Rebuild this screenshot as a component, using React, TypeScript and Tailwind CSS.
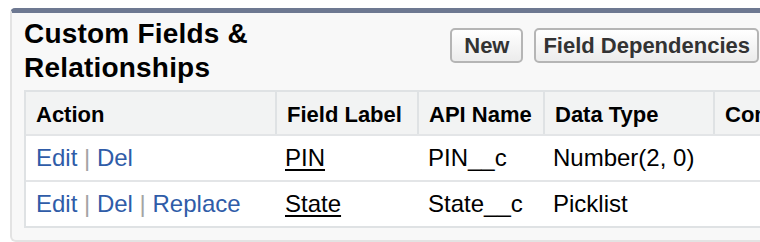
const font = { fontFamily: '"Liberation Sans", Arial, sans-serif' };

type Row = {
  actions: string[];
  label: string;
  api: string;
  type: string;
};

const rows: Row[] = [
  { actions: ['Edit', 'Del'], label: 'PIN', api: 'PIN__c', type: 'Number(2, 0)' },
  { actions: ['Edit', 'Del', 'Replace'], label: 'State', api: 'State__c', type: 'Picklist' },
];

const cols = 'grid grid-cols-[249px_142px_126px_170px_240px]';

function Button({ children, className }: { children: string; className: string }) {
  return (
    <button
      className={`h-[35px] rounded-[5px] border-2 border-[#b5b5b5] bg-gradient-to-b from-white to-[#ececec] text-[22px] font-bold text-[#333] leading-none ${className}`}
    >
      {children}
    </button>
  );
}

export default function App() {
  return (
    <div className="w-[760px] h-[242px] overflow-hidden bg-white" style={font}>
      <div className="ml-[10px] mt-[8px] w-[780px] h-[234px] rounded-t-[5px] rounded-bl-[6px] border-t-[5px] border-t-[#6d7891] border-l-2 border-b-2 border-[#e3e3e3] bg-[#f8f8f8] overflow-hidden">
        <div className="flex items-start justify-between pl-[12px] pr-[31px] pt-[4px]">
          <h2 className="text-[28px] leading-[34px] font-bold tracking-[0.2px] text-black">
            Custom Fields &amp;
            <br />
            Relationships
          </h2>
          <div className="flex gap-[11px] mt-[11px]">
            <Button className="w-[73px]">New</Button>
            <Button className="px-[7px]">Field Dependencies</Button>
          </div>
        </div>

        <div className="ml-[12px] mt-[5px] w-[800px] border-2 border-[#dfe2e4] bg-white">
          <div className={`${cols} h-[42px] bg-[#f2f3f3] text-[22px] font-bold text-black`}>
            {['Action', 'Field Label', 'API Name', 'Data Type', 'Controlling Field'].map((h, i) => (
              <div
                key={h}
                className={`flex items-center pt-[3px] ${i === 0 ? 'pl-[10px]' : 'pl-[10px] border-l-2 border-[#dfe2e4]'}`}
              >
                {h}
              </div>
            ))}
          </div>
          {rows.map((r) => (
            <div key={r.api} className={`${cols} h-[46px] border-t-2 border-[#e3e5e7] text-[24px] text-black items-center`}>
              <div className="pl-[10px] text-[#2f5ca8]">
                {r.actions.map((a, i) => (
                  <span key={a}>
                    {i > 0 && <span className="text-[#a4a4a4]"> | </span>}
                    {a}
                  </span>
                ))}
              </div>
              <div className="pl-[10px] underline underline-offset-[3px]">{r.label}</div>
              <div className="pl-[11px]">{r.api}</div>
              <div className="pl-[10px]">{r.type}</div>
              <div />
            </div>
          ))}
        </div>
      </div>
    </div>
  );
}
